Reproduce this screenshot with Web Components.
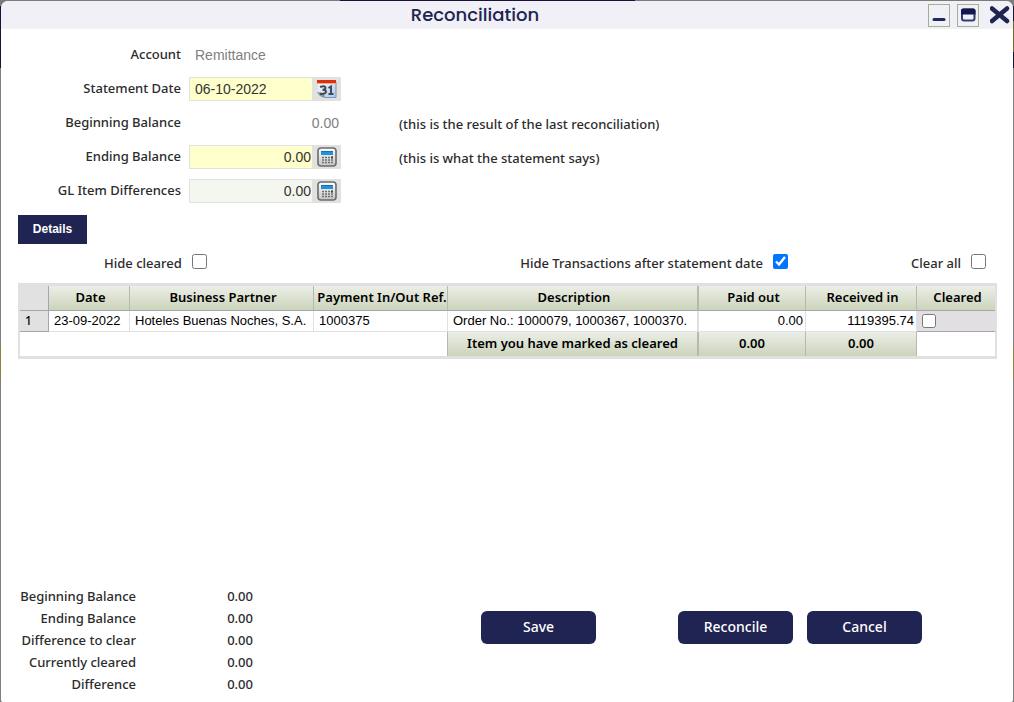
<!DOCTYPE html>
<html lang="en">
<head>
<meta charset="utf-8">
<title>Reconciliation</title>
<style>
  :root {
    --navy: #202452;
    --ui: "Noto Sans", "Open Sans", sans-serif;
    --data: "Liberation Sans", Arial, sans-serif;
  }
  html, body { height: 100%; margin: 0; }
  body {
    display: flex;
    background:
      linear-gradient(#7b7b7d, #7b7b7d) 0 0 / 340px 1px no-repeat,
      linear-gradient(#17133b, #17133b) 340px 0 / 295px 1px no-repeat,
      linear-gradient(#7b7b7d 6px, #17133b 6px 68px, #7f7f7f 68px 347px, #8d8145 347px 380px, #7f7f7f 380px) 0 0 / 8px 100% no-repeat,
      linear-gradient(#7b7b7d 6px, #17133b 6px 21px, #6f6a26 21px 52px, #17133b 52px 68px, #7f7f7f 68px 347px, #8d8145 347px 380px, #7f7f7f 380px) 100% 0 / 8px 100% no-repeat,
      #7b7b7d;
    font: 500 13px/16px var(--ui);
    color: #2c2c2c;
  }
</style>
</head>
<body>
<dialog-window heading="Reconciliation">
  <section-form slot="form">
    <form-field label="Account" value="Remittance" kind="plain"></form-field>
    <form-field label="Statement Date" value="06-10-2022" kind="required" icon="calendar"></form-field>
    <form-field label="Beginning Balance" value="0.00" kind="plain" numeric note="(this is the result of the last reconciliation)"></form-field>
    <form-field label="Ending Balance" value="0.00" kind="required" numeric icon="calculator" note="(this is what the statement says)"></form-field>
    <form-field label="GL Item Differences" value="0.00" kind="optional" numeric icon="calculator"></form-field>
  </section-form>
  <details-panel></details-panel>
  <footer-bar slot="footer">
    <balance-summary></balance-summary>
    <nav-button slot="left">Save</nav-button>
    <nav-button slot="right">Reconcile</nav-button>
    <nav-button slot="right">Cancel</nav-button>
  </footer-bar>
</dialog-window>

<script>
const define = (name, html, setup) => {
  const template = document.createElement('template');
  template.innerHTML = html;
  customElements.define(name, class extends HTMLElement {
    connectedCallback() {
      if (this.shadowRoot) return;
      const root = this.attachShadow({ mode: 'open' });
      root.append(template.content.cloneNode(true));
      if (setup) setup(this, root);
    }
  });
};

const icons = {
  calendar: `<svg width="22" height="20" viewBox="0 0 22 20" aria-hidden="true">
    <defs><linearGradient id="p" x1="0" y1="0" x2="1" y2="1"><stop offset="0" stop-color="#fff"/><stop offset="1" stop-color="#a9c6ea"/></linearGradient></defs>
    <path d="M2 2h18v16H9Q2 17 2 11z" fill="url(#p)"/>
    <path d="M20 3v15.500H9" fill="none" stroke="#7d94bd" stroke-width="1"/>
    <path d="M1 13q2 5 8 6L8 14z" fill="#8a95a5"/>
    <path d="M1 1h19v3H1z" fill="#d8330f"/><path d="M1 4h19v1H1z" fill="#f0a48c"/>
    <path d="M4 8q5-2 5.500.800 0 2-3 2 4 0 3.500 2.400-1 2.500-6 1.500M12.500 9l2.500-1.500V15M12.500 15h5" fill="none" stroke="#454b56" stroke-width="2"/>
  </svg>`,
  calculator: `<svg width="20" height="20" viewBox="0 0 20 20" aria-hidden="true">
    <defs><linearGradient id="b" x1="0" y1="0" x2="0" y2="1"><stop offset="0" stop-color="#fff"/><stop offset="1" stop-color="#c4c4c4"/></linearGradient></defs>
    <rect x="1" y="1" width="18" height="18" rx="3" fill="url(#b)" stroke="#6b6b6b" stroke-width="1.600"/>
    <rect x="4" y="4" width="12" height="4" fill="#2192dc"/><path d="M4 4h12v1H4z" fill="#1670b8"/>
    <path d="M5 10.500h2m1 0h2m1 0h2m1 0h2M5 13h2m1 0h2m1 0h2m1 0h2M5 15.500h2m1 0h2m1 0h2m1 0h2" stroke="#707070" stroke-width="1.500"/>
    <path d="M14 9.500h2v2h-2z" fill="#444"/>
  </svg>`
};

define('nav-button', `
  <style>
    :host { display: block; flex: 0 1 115px; }
    button {
      width: 100%; height: 33px; padding: 0 0 2px; border: 0; border-radius: 6px;
      background: var(--navy); color: #fff; font: 500 14px/20px var(--ui);
    }
  </style>
  <button type="button"><slot></slot></button>`);

define('section-form', `
  <style>:host { display: flex; flex-direction: column; gap: 10px; padding: 14px 0 0 17px; }</style>
  <slot></slot>`);

define('form-field', `
  <style>
    :host { display: grid; grid-template-columns: 163px 152px auto; justify-content: start; column-gap: 8px; align-items: center; }
    label { padding-bottom: 2px; text-align: right; }
    .box { display: flex; box-sizing: border-box; height: 24px; border: 1px solid transparent; }
    .required, .optional { border-color: #e0e1e0; }
    input {
      flex: 1; min-width: 0; padding: 0 1px 0 5px; border: 0; background: none; outline: 0;
      font: 14px/20px var(--data); color: #333;
    }
    .plain input { color: #808080; }
    .required input { background: #ffffcc; }
    .optional input { background: #f4f7f0; }
    .numeric input { text-align: right; }
    button { display: grid; place-items: center; width: 28px; padding: 0 0 0 2px; border: 0; background: #e1e2de; }
    .note { padding: 1px 0 0 50px; }
  </style>
  <label for="field"></label>
  <div class="box"><input id="field"><button type="button"></button></div>
  <span class="note"></span>`, (host, root) => {
  const label = host.getAttribute('label');
  const input = root.querySelector('input');
  const kind = host.getAttribute('kind');
  const button = root.querySelector('button');
  root.querySelector('label').textContent = label;
  input.value = host.getAttribute('value');
  input.readOnly = kind === 'plain';
  root.querySelector('.box').classList.add(kind);
  if (host.hasAttribute('numeric')) root.querySelector('.box').classList.add('numeric');
  if (host.hasAttribute('icon')) {
    button.innerHTML = icons[host.getAttribute('icon')];
    button.setAttribute('aria-label', host.getAttribute('icon'));
  } else button.remove();
  root.querySelector('.note').textContent = host.getAttribute('note') || '';
});

define('check-option', `
  <style>
    :host { display: block; }
    label { display: flex; align-items: flex-start; gap: 10px; white-space: nowrap; }
    span { padding-top: 3px; }
    input { width: 15px; height: 15px; margin: 2px 0 0; }
  </style>
  <label><span><slot></slot></span><input type="checkbox"></label>`, (host, root) => {
  root.querySelector('input').checked = host.hasAttribute('checked');
});

define('transaction-table', `
  <style>
    :host { display: block; border: solid #e0e0e0; border-width: 3px 2px; }
    table { width: 100%; table-layout: fixed; border-collapse: separate; border-spacing: 0; color: #000; }
    th, td { box-sizing: border-box; padding: 0; white-space: nowrap; overflow: hidden; }
    th { height: 24px; padding-bottom: 2px; border-right: 1px solid #b5bab0; background: linear-gradient(#ebeee7, #ccd4ba); font: 600 13px/16px var(--ui); text-align: center; }
    thead th { height: 25px; padding: 0 0 3px 3px; border-bottom: 1px solid #a3a6b0; }
    thead td, .index { background: #e1e1e1; border-right: 1px solid #a3a6b0; border-bottom: 1px solid #a3a6b0; }
    tbody td { height: 21px; padding: 0 2px 0 5px; border-right: 1px solid #e0e0e0; border-bottom: 1px solid #e0e0e0; font: 13px/20px var(--data); }
    tbody .index { padding-left: 5px; border-color: #a3a6b0; font: 500 12px/16px var(--ui); }
    .num { text-align: right; }
    tbody .mark { border-bottom-color: #a3a6b0; background: #e1dfe1; }
    th.edge, td.edge { border-right-width: 2px; }
    thead th:last-child, tbody .mark { border-right: 0; }
    tfoot td:first-child { border-right: 1px solid #b5bab0; }
    input { display: block; width: 14px; height: 14px; margin: 0; }
  </style>
  <table>
    <colgroup><col style="width:29px"><col style="width:81px"><col style="width:184px"><col style="width:134px"><col><col style="width:107px"><col style="width:111px"><col style="width:78px"></colgroup>
    <thead><tr><td></td><th>Date</th><th>Business Partner</th><th>Payment In/Out Ref.</th><th class="edge">Description</th><th>Paid out</th><th>Received in</th><th>Cleared</th></tr></thead>
    <tbody><tr><td class="index">1</td><td>23-09-2022</td><td>Hoteles Buenas Noches, S.A.</td><td>1000375</td><td class="edge">Order No.: 1000079, 1000367, 1000370.</td><td class="num">0.00</td><td class="num">1119395.74</td><td class="mark"><input type="checkbox" aria-label="Cleared"></td></tr></tbody>
    <tfoot><tr><td colspan="4"></td><th class="edge">Item you have marked as cleared</th><th>0.00</th><th>0.00</th><td></td></tr></tfoot>
  </table>`);

define('details-panel', `
  <style>
    :host { display: block; padding: 12px 16px 0 17px; }
    .tab { display: block; width: 69px; height: 29px; padding: 0 0 2px; border: 0; background: var(--navy); color: #fff; font: 700 12px/16px var(--data); }
    .options { display: flex; height: 19px; padding: 8px 11px 12px 86px; }
    .options :nth-child(2) { margin-left: auto; }
    .options :nth-child(3) { margin-left: 123px; }
  </style>
  <button class="tab" type="button">Details</button>
  <div class="options">
    <check-option>Hide cleared</check-option>
    <check-option checked>Hide Transactions after statement date</check-option>
    <check-option>Clear all</check-option>
  </div>
  <transaction-table></transaction-table>`);

define('balance-summary', `
  <style>
    :host { display: block; }
    table { border-spacing: 0; }
    th, td { box-sizing: border-box; height: 22px; padding: 0 0 2px; font: inherit; text-align: right; }
    th { width: 118px; }
    td { width: 117px; }
  </style>
  <table>
    <tr><th scope="row">Beginning Balance</th><td>0.00</td></tr>
    <tr><th scope="row">Ending Balance</th><td>0.00</td></tr>
    <tr><th scope="row">Difference to clear</th><td>0.00</td></tr>
    <tr><th scope="row">Currently cleared</th><td>0.00</td></tr>
    <tr><th scope="row">Difference</th><td>0.00</td></tr>
  </table>`);

define('footer-bar', `
  <style>
    :host { display: flex; padding: 0 91px 6px 17px; }
    .actions { display: flex; flex: 1; justify-content: flex-end; gap: 82px; padding-top: 25px; }
    .group { display: flex; gap: 14px; }
    slot::slotted(nav-button) { width: 115px; }
  </style>
  <slot></slot>
  <div class="actions"><div class="group"><slot name="left"></slot></div><div class="group"><slot name="right"></slot></div></div>`);

define('dialog-window', `
  <style>
    :host { display: flex; flex: 1; flex-direction: column; min-width: 0; margin: 1px 1px 0; border-radius: 7px 7px 2px 2px; background: #fff; overflow: hidden; }
    header { display: grid; grid-template-columns: 1fr auto 1fr; align-items: center; height: 28px; background: #f0f0f6; }
    h1 { grid-column: 2; margin: 0; padding-right: 64px; color: var(--navy); font: 500 18px/24px Poppins, Inter, sans-serif; }
    nav { display: flex; justify-content: flex-end; align-items: center; gap: 7px; padding-right: 2px; }
    button { display: grid; place-items: center; box-sizing: border-box; width: 22px; height: 23px; padding: 0; border: 1px solid #9eb48e; background: none; }
    .close { margin-left: 3px; border-color: transparent; }
    main { flex: 1; }
  </style>
  <header>
    <h1></h1>
    <nav>
      <button type="button" aria-label="Minimize"><svg width="20" height="20" viewBox="0 0 20 20"><path d="M5 14.500h10" stroke="#202860" stroke-width="3" stroke-linecap="round"/></svg></button>
      <button type="button" aria-label="Maximize"><svg width="20" height="20" viewBox="0 0 20 20"><rect x="4" y="4.500" width="12.500" height="11" rx="2" fill="none" stroke="#333c70" stroke-width="2"/><path d="M3 9.500V5.500q0-2 2-2h10.500q2 0 2 2v4z" fill="#101850"/></svg></button>
      <button class="close" type="button" aria-label="Close"><svg width="20" height="20" viewBox="0 0 20 20"><path d="M2 3.500l15 12.500M17 3.500L2 16" stroke="#202452" stroke-width="4.500" stroke-linecap="round"/></svg></button>
    </nav>
  </header>
  <main><slot name="form"></slot><slot></slot></main>
  <slot name="footer"></slot>`, (host, root) => {
  root.querySelector('h1').textContent = host.getAttribute('heading');
});
</script>
</body>
</html>
